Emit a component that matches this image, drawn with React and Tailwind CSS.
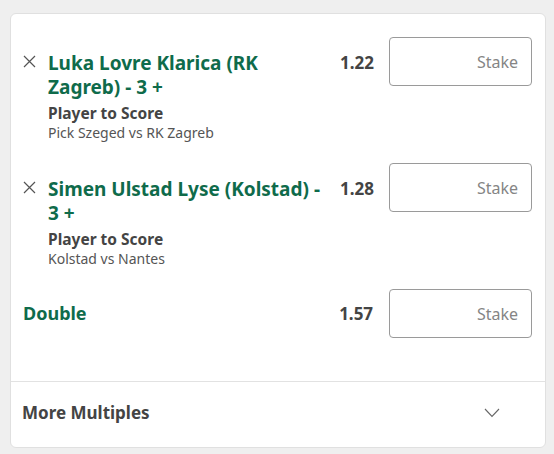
const selections = [
  {
    name: "Luka Lovre Klarica (RK Zagreb) - 3 +",
    market: "Player to Score",
    event: "Pick Szeged vs RK Zagreb",
    odds: "1.22"
  },
  {
    name: "Simen Ulstad Lyse (Kolstad) - 3 +",
    market: "Player to Score",
    event: "Kolstad vs Nantes",
    odds: "1.28"
  }
];

function StakeBox() {
  return (
    <div className="flex h-[49px] w-[143px] shrink-0 items-center justify-end rounded-[4px] border border-[#9a9a9a] bg-white pr-[13px] text-[16px] text-[#858585]">
      Stake
    </div>
  );
}

function CloseIcon() {
  return (
    <svg width="13" height="13" viewBox="0 0 13 13" className="mt-[18px] shrink-0 text-[#555]">
      <path d="M1 1L12 12M12 1L1 12" stroke="currentColor" strokeWidth="1.2" fill="none" />
    </svg>
  );
}

export default function App() {
  return (
    <div
      className="min-h-[454px] w-[554px] bg-[#efefef] pt-[13px]"
      style={{ fontFamily: '"Segoe UI", "Noto Sans", "Open Sans", sans-serif' }}
    >
      <div className="ml-[10px] w-[536px] rounded-[6px] border border-[#e0e0e0] bg-white">
        <div className="pb-[43px] pl-[12px] pr-[13px] pt-[23px]">
          {selections.map((s) => (
            <div key={s.name} className="mb-[20px] flex items-start">
              <CloseIcon />
              <div className="ml-[12px] w-[280px] pt-[14px]">
                <p className="text-[19px] font-bold leading-[24px] text-[#0f6b4b]">{s.name}</p>
                <p className="mt-[4px] text-[15.5px] font-bold leading-[20px] text-[#444]">{s.market}</p>
                <p className="text-[14px] leading-[20px] text-[#555]">{s.event}</p>
              </div>
              <p className="ml-[12px] w-[49px] pt-[14px] text-[17px] font-bold leading-[24px] text-[#444]">{s.odds}</p>
              <div className="ml-auto">
                <StakeBox />
              </div>
            </div>
          ))}
          <div className="flex items-center">
            <p className="w-[317px] text-[18px] font-bold text-[#0f6b4b]">Double</p>
            <p className="w-[50px] text-[17px] font-bold text-[#444]">1.57</p>
            <div className="ml-auto">
              <StakeBox />
            </div>
          </div>
        </div>
        <div className="flex h-[66px] items-center justify-between border-t border-[#e2e2e2] pb-[3px] pl-[11px] pr-[45px]">
          <p className="text-[17px] font-bold text-[#444]">More Multiples</p>
          <svg width="16" height="10" viewBox="0 0 16 10" className="text-[#666]">
            <path d="M1 1L8 8.5L15 1" stroke="currentColor" strokeWidth="1.1" fill="none" />
          </svg>
        </div>
      </div>
    </div>
  );
}
